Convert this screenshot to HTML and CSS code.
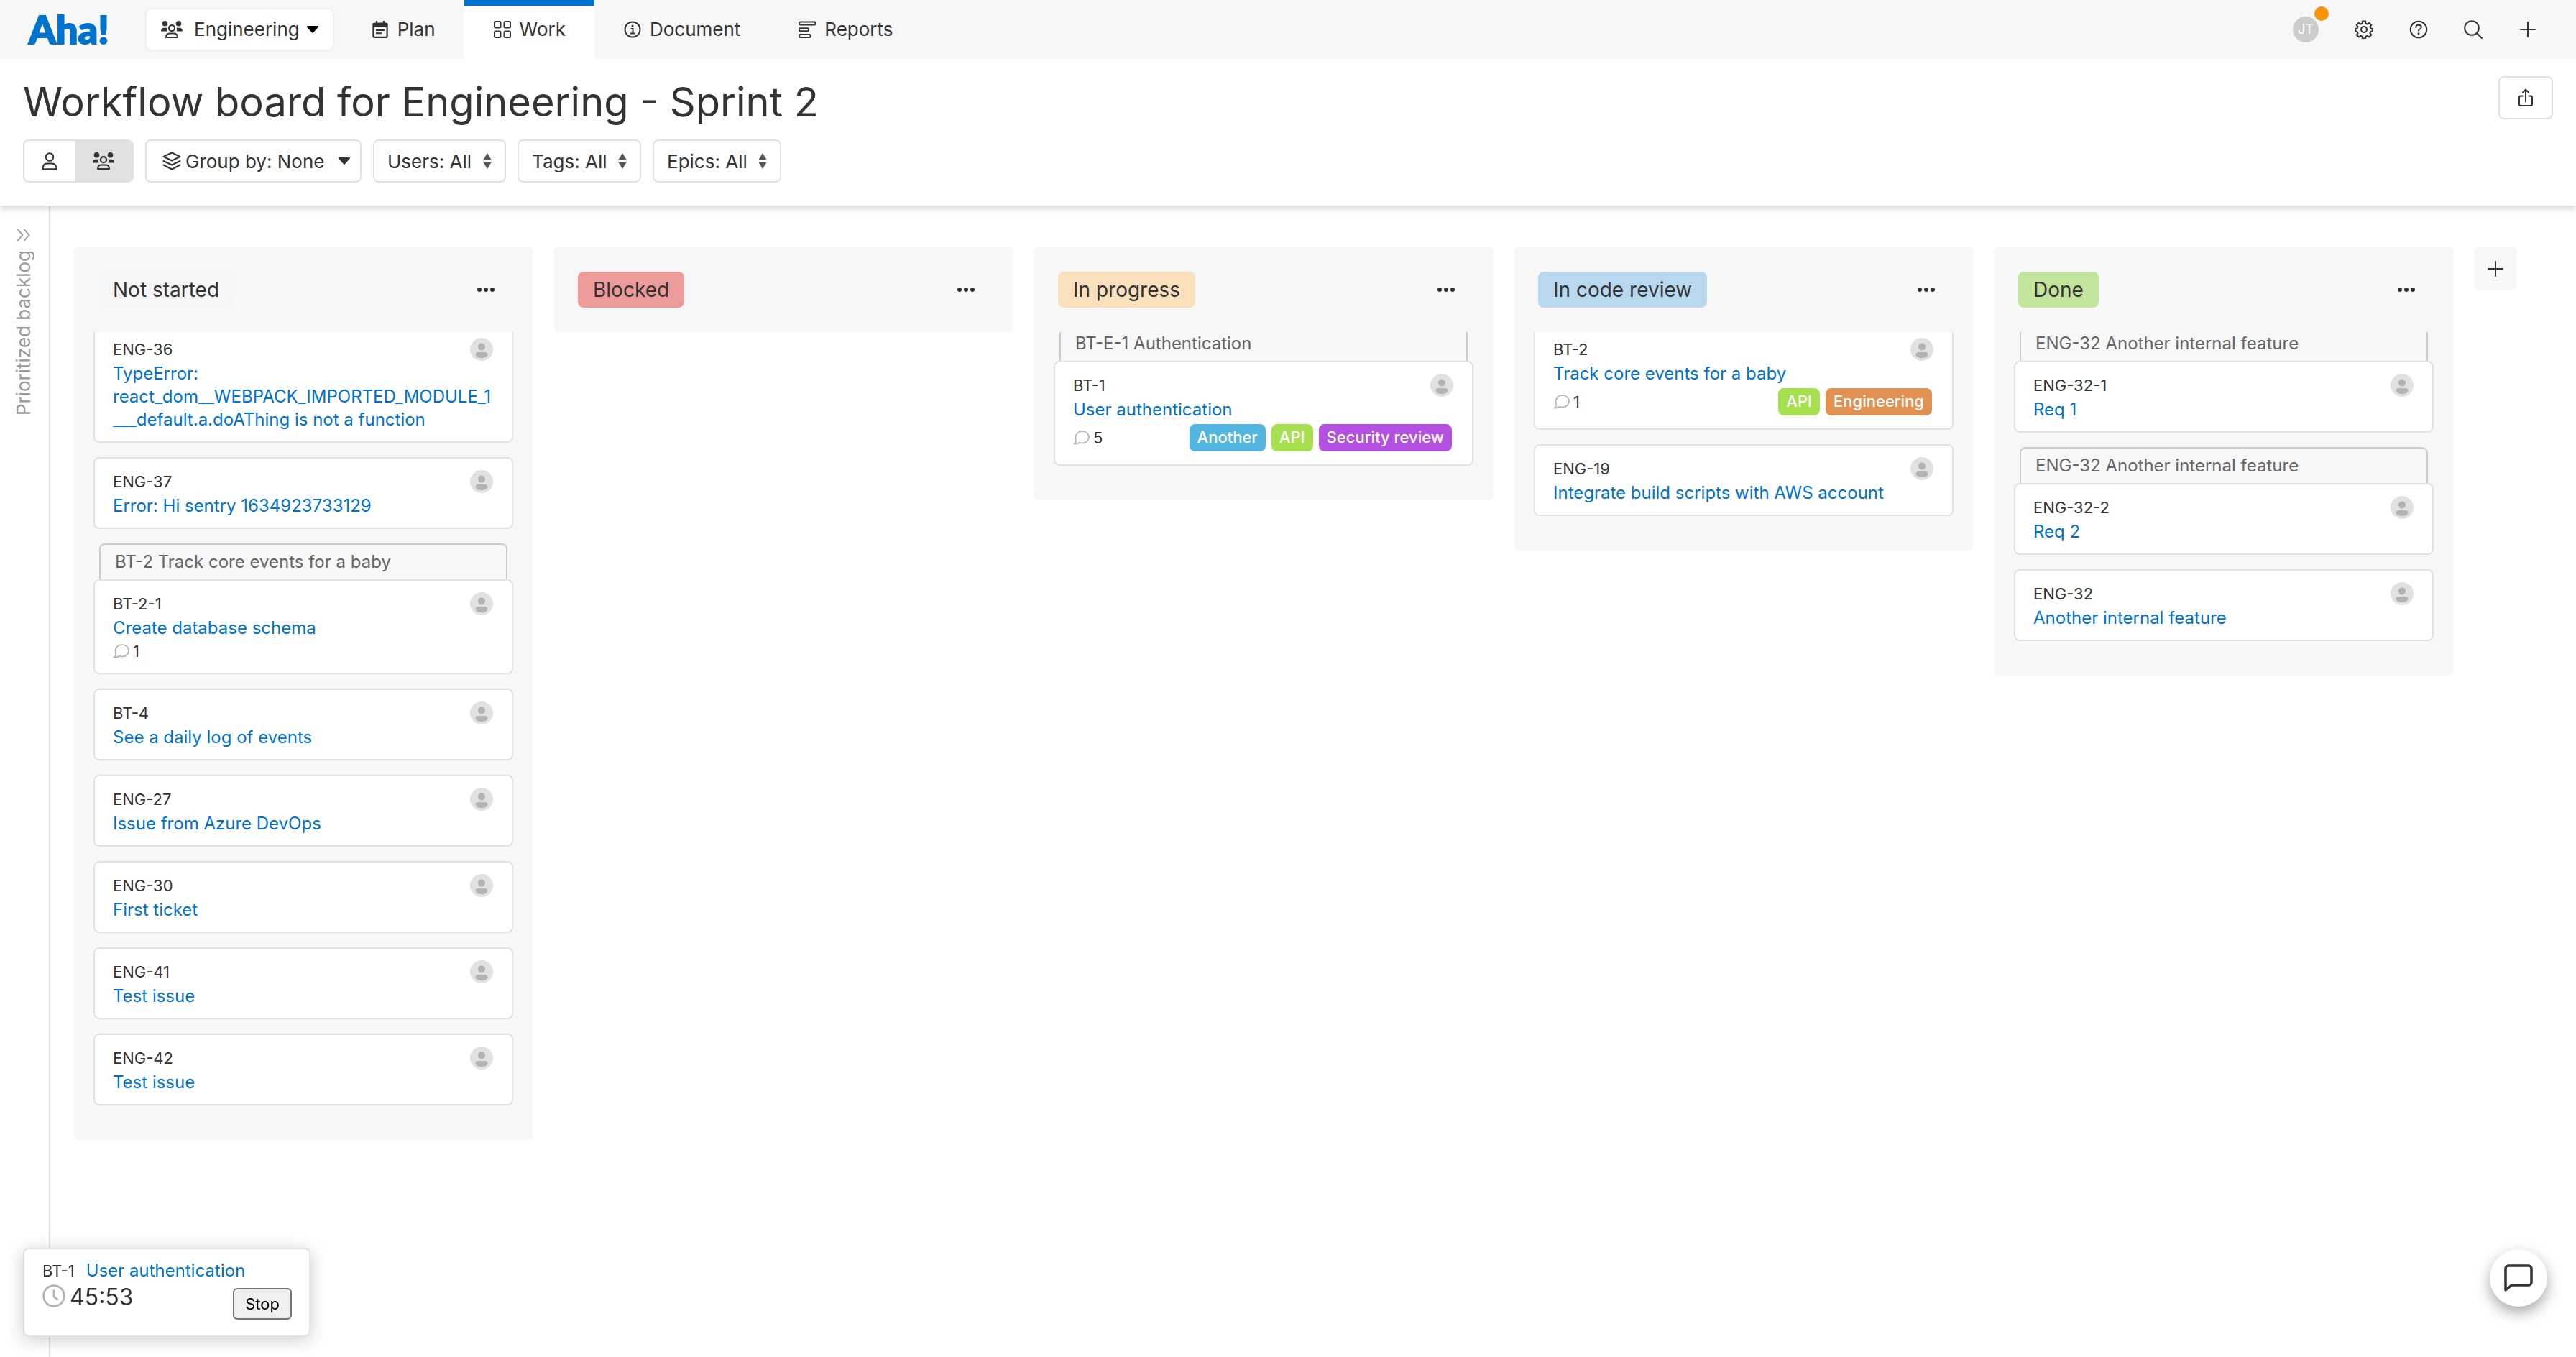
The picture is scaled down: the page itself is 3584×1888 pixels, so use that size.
FILE: index.html
```html
<!DOCTYPE html>
<html lang="en">
<head>
<meta charset="utf-8">
<title>Workflow board for Engineering - Sprint 2</title>
<link rel="stylesheet" href="styles.css">
</head>
<body>
<svg class="sprite" aria-hidden="true">
  <symbol id="i-team" viewBox="0 0 30 26">
    <g fill="currentColor"><circle cx="5.500" cy="4.800" r="3.800"/><circle cx="24.500" cy="4.800" r="3.800"/><path d="M0 15.500c0-3 1.500-4.800 4-4.800h4.500c-.8 1.600-.8 3.200-.2 4.800zM30 15.500c0-3-1.500-4.800-4-4.800h-4.500c.8 1.600.8 3.200.2 4.800z"/></g>
    <g fill="none" stroke="currentColor" stroke-width="2.200"><circle cx="15" cy="11.200" r="4"/><path d="M7 24c0-4 2-5.500 5-5.500h6c3 0 5 1.500 5 5.500z" stroke-linejoin="round"/></g>
  </symbol>
  <symbol id="i-person" viewBox="0 0 26 26">
    <g fill="none" stroke="currentColor" stroke-width="2" stroke-linejoin="round"><circle cx="13" cy="7.500" r="5.300"/><path d="M3.500 24.300c0-5 2-7.800 6-7.800h7c4 0 6 2.800 6 7.800z"/></g>
  </symbol>
  <symbol id="i-plan" viewBox="0 0 26 26">
    <path fill="currentColor" fill-rule="evenodd" d="M7 1h2.200v2.500h7.600V1H19v2.500h2a2.700 2.700 0 0 1 2.700 2.700v16A2.700 2.700 0 0 1 21 25H5a2.700 2.700 0 0 1-2.700-2.700v-16A2.700 2.700 0 0 1 5 3.500h2zM4.500 10v11.500a1.300 1.300 0 0 0 1.300 1.300h14.400a1.300 1.300 0 0 0 1.300-1.300V10zM7 13h12v2H7zM7 17.300h8v2H7z"/>
  </symbol>
  <symbol id="i-work" viewBox="0 0 26 26">
    <g fill="none" stroke="currentColor" stroke-width="2"><rect x="2" y="2" width="8.500" height="8.500" rx="1.500"/><rect x="15.500" y="2" width="8.500" height="8.500" rx="1.500"/><rect x="2" y="15.500" width="8.500" height="8.500" rx="1.500"/><rect x="15.500" y="15.500" width="8.500" height="8.500" rx="1.500"/></g>
  </symbol>
  <symbol id="i-info" viewBox="0 0 26 26">
    <circle cx="13" cy="13" r="10.500" fill="none" stroke="currentColor" stroke-width="2"/><circle cx="13" cy="8" r="1.500" fill="currentColor"/><path d="M10.500 12h3v6.500M10 18.500h6.500" fill="none" stroke="currentColor" stroke-width="2"/>
  </symbol>
  <symbol id="i-reports" viewBox="0 0 26 26">
    <g fill="none" stroke="currentColor" stroke-width="2"><rect x="2" y="2.500" width="22.500" height="4" rx="1.500"/><rect x="2" y="11.200" width="13" height="4" rx="1.500"/><rect x="2" y="20" width="15.500" height="4" rx="1.500"/></g>
  </symbol>
  <symbol id="i-caret" viewBox="0 0 16 10"><path fill="currentColor" d="M1 0h14a1 1 0 0 1 .7 1.700L9 9.300a1.400 1.400 0 0 1-2 0L.3 1.700A1 1 0 0 1 1 0z"/></symbol>
  <symbol id="i-updown" viewBox="0 0 12 24"><path fill="currentColor" d="M6 1l5.500 9H.5zM6 23l5.500-9H.5z"/></symbol>
  <symbol id="i-layers" viewBox="0 0 26 26">
    <g fill="none" stroke="currentColor" stroke-width="2" stroke-linejoin="round" stroke-linecap="round"><path d="M13 1.500L24.500 7 13 12.500 1.500 7z"/><path d="M1.500 13L13 18.500 24.500 13M1.500 18.500L13 24.500l11.500-6"/></g>
  </symbol>
  <symbol id="i-gear" viewBox="0 0 26 26">
    <g fill="none" stroke="currentColor" stroke-width="2" stroke-linejoin="round"><circle cx="13" cy="13" r="4"/><path d="M10.800 1.500h4.400v3l2.700 1.200 2.300-2 3.100 3.100-1.900 2.400 1.100 2.200 2.200.4v3.500l-2.300.6-1 2.300 1.900 2.300-3.200 3-2.400-1.800-2.500 1.200v2.600h-4.400v-2.600l-2.500-1.200-2.400 1.800-3.200-3 1.900-2.300-1-2.300-2.300-.6v-3.500l2.200-.4 1.100-2.200-1.900-2.400 3.100-3.100 2.300 2 2.700-1.200z"/></g>
  </symbol>
  <symbol id="i-help" viewBox="0 0 26 26">
    <g fill="none" stroke="currentColor" stroke-width="2" stroke-linecap="round"><circle cx="13" cy="13" r="11.300"/><path d="M9.300 10c0-2 1.500-3.300 3.700-3.300S16.800 8 16.800 9.800c0 2.700-3.800 2.700-3.800 5"/></g><circle cx="13" cy="18.800" r="1.500" fill="currentColor"/>
  </symbol>
  <symbol id="i-search" viewBox="0 0 26 26"><g fill="none" stroke="currentColor" stroke-width="2" stroke-linecap="round"><circle cx="11" cy="11" r="9.800"/><path d="M18 18l7 7"/></g></symbol>
  <symbol id="i-plus" viewBox="0 0 26 26"><path d="M13 3v20M3 13h20" fill="none" stroke="currentColor" stroke-width="2" stroke-linecap="round"/></symbol>
  <symbol id="i-share" viewBox="0 0 26 26"><path d="M8.500 10.500H6a2 2 0 0 0-2 2V22a2 2 0 0 0 2 2h14a2 2 0 0 0 2-2v-9.500a2 2 0 0 0-2-2h-2.500M13 18.500V2M9 5.500L13 1.700l4 3.800" fill="none" stroke="currentColor" stroke-width="2" stroke-linecap="round"/></symbol>
  <symbol id="i-more" viewBox="0 0 24 6"><g fill="currentColor"><circle cx="3" cy="3" r="3"/><circle cx="12" cy="3" r="3"/><circle cx="21" cy="3" r="3"/></g></symbol>
  <symbol id="i-chevrons" viewBox="0 0 20 18"><path d="M1.500 1l7 8-7 8M10.500 1l7 8-7 8" fill="none" stroke="currentColor" stroke-width="1.800"/></symbol>
  <symbol id="i-user" viewBox="0 0 32 32"><circle cx="16" cy="16" r="16" fill="#e1e1e1"/><circle cx="16" cy="12.500" r="5" fill="#b3b3b3"/><path d="M7.500 23c0-2 2-3 4-3h9c2 0 4 1 4 3 0 3-4 5-8.500 5s-8.500-2-8.500-5z" fill="#b3b3b3"/></symbol>
  <symbol id="i-comment" viewBox="0 0 24 20"><path d="M4.500 14.500C1.500 8 5.500 1 13 1c5 0 9 3.500 9 8.200s-4 8.300-9 8.300c-1.500 0-3-.3-4-.8-2 1.500-4.500 2-7.500 2 1.500-1.200 2.500-2.500 3-4.200z" fill="none" stroke="#b3b3b3" stroke-width="1.700" stroke-linejoin="round"/></symbol>
  <symbol id="i-clock" viewBox="0 0 30 30"><g fill="none" stroke="#b3b3b3" stroke-width="2.500" stroke-linecap="round"><circle cx="15" cy="15" r="13.500"/><path d="M15 8v8l4.500 3.500"/></g></symbol>
  <symbol id="i-chat" viewBox="0 0 40 38"><path d="M6 2h28a4 4 0 0 1 4 4v19a4 4 0 0 1-4 4H10.500L2 36V6a4 4 0 0 1 4-4z" fill="none" stroke="currentColor" stroke-width="3.500" stroke-linejoin="round"/></symbol>
</svg>

<header class="topbar">
  <a class="logo" href="#">Aha!</a>
  <button class="workspace" type="button"><svg class="icon-wide"><use href="#i-team"/></svg>Engineering<svg class="caret"><use href="#i-caret"/></svg></button>
  <nav class="tabs">
    <a class="tab" href="#"><svg class="icon"><use href="#i-plan"/></svg>Plan</a>
    <a class="tab tab-active" href="#" aria-current="page"><svg class="icon"><use href="#i-work"/></svg>Work</a>
    <a class="tab" href="#"><svg class="icon"><use href="#i-info"/></svg>Document</a>
    <a class="tab" href="#"><svg class="icon"><use href="#i-reports"/></svg>Reports</a>
  </nav>
  <div class="tools">
    <button class="account" type="button" aria-label="Account"><span class="initials">JT</span><span class="badge"></span></button>
    <button class="tool" type="button" aria-label="Settings"><svg class="icon"><use href="#i-gear"/></svg></button>
    <button class="tool" type="button" aria-label="Help"><svg class="icon"><use href="#i-help"/></svg></button>
    <button class="tool" type="button" aria-label="Search"><svg class="icon"><use href="#i-search"/></svg></button>
    <button class="tool" type="button" aria-label="Add"><svg class="icon"><use href="#i-plus"/></svg></button>
  </div>
</header>

<section class="page-head">
  <div class="title-row">
    <h1>Workflow board for Engineering - Sprint 2</h1>
    <button class="box share" type="button" aria-label="Share"><svg class="icon"><use href="#i-share"/></svg></button>
  </div>
  <div class="filters">
    <div class="box toggle">
      <button type="button" aria-label="My work" aria-pressed="false"><svg class="icon"><use href="#i-person"/></svg></button>
      <button type="button" aria-label="Team work" aria-pressed="true"><svg class="icon-wide"><use href="#i-team"/></svg></button>
    </div>
    <label class="box filter filter-group"><svg class="icon"><use href="#i-layers"/></svg><select aria-label="Group by"><option>Group by: None</option></select><svg class="caret"><use href="#i-caret"/></svg></label>
    <label class="box filter"><select aria-label="Users"><option>Users: All</option></select><svg class="updown"><use href="#i-updown"/></svg></label>
    <label class="box filter"><select aria-label="Tags"><option>Tags: All</option></select><svg class="updown"><use href="#i-updown"/></svg></label>
    <label class="box filter"><select aria-label="Epics"><option>Epics: All</option></select><svg class="updown"><use href="#i-updown"/></svg></label>
  </div>
</section>

<div class="workarea">
  <aside class="backlog">
    <button type="button"><svg class="chevrons"><use href="#i-chevrons"/></svg><span class="backlog-label">Prioritized backlog</span></button>
  </aside>
  <main class="board">
    <section class="column">
      <header class="column-head"><h2 class="status">Not started</h2><button class="more" type="button" aria-label="Column menu"><svg><use href="#i-more"/></svg></button></header>
      <div class="cards">
        <article class="card"><div class="card-top"><span>ENG-36</span><svg class="avatar"><use href="#i-user"/></svg></div><a href="#">TypeError: react_dom__WEBPACK_IMPORTED_MODULE_1___default.a.doAThing is not a function</a></article>
        <article class="card"><div class="card-top"><span>ENG-37</span><svg class="avatar"><use href="#i-user"/></svg></div><a href="#">Error: Hi sentry 1634923733129</a></article>
        <div class="nested"><div class="parent">BT-2 Track core events for a baby</div>
        <article class="card"><div class="card-top"><span>BT-2-1</span><svg class="avatar"><use href="#i-user"/></svg></div><a href="#">Create database schema</a><div class="meta"><span class="comments"><svg><use href="#i-comment"/></svg>1</span></div></article></div>
        <article class="card"><div class="card-top"><span>BT-4</span><svg class="avatar"><use href="#i-user"/></svg></div><a href="#">See a daily log of events</a></article>
        <article class="card"><div class="card-top"><span>ENG-27</span><svg class="avatar"><use href="#i-user"/></svg></div><a href="#">Issue from Azure DevOps</a></article>
        <article class="card"><div class="card-top"><span>ENG-30</span><svg class="avatar"><use href="#i-user"/></svg></div><a href="#">First ticket</a></article>
        <article class="card"><div class="card-top"><span>ENG-41</span><svg class="avatar"><use href="#i-user"/></svg></div><a href="#">Test issue</a></article>
        <article class="card"><div class="card-top"><span>ENG-42</span><svg class="avatar"><use href="#i-user"/></svg></div><a href="#">Test issue</a></article>
      </div>
    </section>
    <section class="column">
      <header class="column-head"><h2 class="status status-blocked">Blocked</h2><button class="more" type="button" aria-label="Column menu"><svg><use href="#i-more"/></svg></button></header>
    </section>
    <section class="column">
      <header class="column-head"><h2 class="status status-progress">In progress</h2><button class="more" type="button" aria-label="Column menu"><svg><use href="#i-more"/></svg></button></header>
      <div class="cards">
        <div class="nested"><div class="parent">BT-E-1 Authentication</div>
        <article class="card"><div class="card-top"><span>BT-1</span><svg class="avatar"><use href="#i-user"/></svg></div><a href="#">User authentication</a><div class="meta meta-tagged"><span class="comments"><svg><use href="#i-comment"/></svg>5</span><span class="tag tag-blue">Another</span><span class="tag tag-green">API</span><span class="tag tag-purple">Security review</span></div></article></div>
      </div>
    </section>
    <section class="column">
      <header class="column-head"><h2 class="status status-review">In code review</h2><button class="more" type="button" aria-label="Column menu"><svg><use href="#i-more"/></svg></button></header>
      <div class="cards">
        <article class="card"><div class="card-top"><span>BT-2</span><svg class="avatar"><use href="#i-user"/></svg></div><a href="#">Track core events for a baby</a><div class="meta meta-tagged"><span class="comments"><svg><use href="#i-comment"/></svg>1</span><span class="tag tag-green">API</span><span class="tag tag-orange">Engineering</span></div></article>
        <article class="card"><div class="card-top"><span>ENG-19</span><svg class="avatar"><use href="#i-user"/></svg></div><a href="#">Integrate build scripts with AWS account</a></article>
      </div>
    </section>
    <section class="column">
      <header class="column-head"><h2 class="status status-done">Done</h2><button class="more" type="button" aria-label="Column menu"><svg><use href="#i-more"/></svg></button></header>
      <div class="cards">
        <div class="nested"><div class="parent">ENG-32 Another internal feature</div>
        <article class="card"><div class="card-top"><span>ENG-32-1</span><svg class="avatar"><use href="#i-user"/></svg></div><a href="#">Req 1</a></article></div>
        <div class="nested"><div class="parent">ENG-32 Another internal feature</div>
        <article class="card"><div class="card-top"><span>ENG-32-2</span><svg class="avatar"><use href="#i-user"/></svg></div><a href="#">Req 2</a></article></div>
        <article class="card"><div class="card-top"><span>ENG-32</span><svg class="avatar"><use href="#i-user"/></svg></div><a href="#">Another internal feature</a></article>
      </div>
    </section>
    <button class="add-column" type="button" aria-label="Add column"><svg class="icon"><use href="#i-plus"/></svg></button>
  </main>
</div>

<aside class="timer">
  <div class="timer-item"><span>BT-1</span><a href="#">User authentication</a></div>
  <div class="timer-row"><svg class="clock"><use href="#i-clock"/></svg><span class="elapsed">45:53</span><button class="stop" type="button">Stop</button></div>
</aside>
<button class="chat" type="button" aria-label="Chat"><svg><use href="#i-chat"/></svg></button>
</body>
</html>
```
FILE: styles.css
```css
* { box-sizing: border-box; }

body {
  margin: 0;
  min-height: 100vh;
  display: flex;
  flex-direction: column;
  background: #fff;
  color: #333;
  font: 26px/32px Inter, "Liberation Sans", sans-serif;
}

h1, h2 { margin: 0; font-weight: 400; }
button, select { font: inherit; color: inherit; background: none; border: 0; padding: 0; margin: 0; }
button { cursor: pointer; display: flex; align-items: center; justify-content: center; }
a { color: #0073cf; text-decoration: none; }
svg { display: block; flex: none; }

.sprite { position: absolute; width: 0; height: 0; }
.icon { width: 26px; height: 26px; }
.icon-wide { width: 30px; height: 26px; }
.caret { width: 16px; height: 10px; }
.updown { width: 12px; height: 24px; color: #555; }

/* Top navigation */
.topbar { display: flex; align-items: center; height: 82px; background: #f7f7f7; }
.logo { width: 202px; padding-left: 40px; font: 900 54px/64px Lato, sans-serif; -webkit-text-stroke: 2px #0073cf; }
.workspace {
  height: 60px;
  padding: 0 20px;
  margin-right: 11px;
  background: #fff;
  border: 2px solid #efefef;
  border-radius: 8px;
}
.workspace .icon-wide { margin-right: 16px; }
.workspace .caret { margin-left: 10px; color: #000; }
.tabs { display: flex; align-self: stretch; }
.tab {
  display: flex;
  align-items: center;
  gap: 11px;
  padding: 0 40px 8px;
  border-top: 8px solid transparent;
  color: #333;
}
.tab-active { background: #fff; border-top-color: #0073cf; }
.tools { display: flex; align-items: center; gap: 50px; margin-left: auto; padding-right: 54px; }
.account { position: relative; }
.initials {
  width: 36px;
  border-radius: 50%;
  background: #ccc;
  color: #fff;
  font-size: 18px;
  line-height: 36px;
}
.badge { position: absolute; top: -14px; right: -14px; width: 20px; height: 20px; border-radius: 50%; background: #f8930c; }

/* Page heading and filters */
.page-head { position: relative; z-index: 2; padding: 24px 32px 32px; background: #fff; box-shadow: 0 6px 6px rgba(0, 0, 0, .12); }
.title-row { display: flex; justify-content: space-between; align-items: flex-start; margin-bottom: 16px; }
h1 { font-size: 56px; line-height: 72px; }
.box { height: 60px; background: #fff; border: 2px solid #e1e1e1; border-radius: 8px; }
.share { width: 76px; }
.filters { display: flex; gap: 16px; }
.toggle { display: flex; width: 154px; overflow: hidden; }
.toggle button { flex: 1; }
.toggle [aria-pressed="true"] { flex: none; width: 80px; background: #e1e1e1; }
.filter { display: flex; align-items: center; gap: 15px; padding: 0 18px; }
.filter select { appearance: none; padding-top: 2px; }
.filter-group { padding: 0 14px 0 22px; }
.filter-group .icon { margin-right: -9px; }
.filter-group .caret { margin-left: 4px; }

/* Board */
.workarea { flex: 1; display: flex; }
.backlog { width: 70px; border-right: 2px solid #e1e1e1; padding-top: 32px; color: #999; }
.backlog button { flex-direction: column; gap: 12px; width: 66px; }
.chevrons { width: 20px; height: 18px; }
.backlog-label { writing-mode: vertical-rl; transform: rotate(180deg); }
.board { flex: 1; display: flex; align-items: flex-start; gap: 28px; padding: 58px 32px; }
.column { flex: 0 0 640px; background: #f7f7f7; border-radius: 8px; }
.column-head {
  position: relative;
  z-index: 1;
  display: flex;
  justify-content: space-between;
  align-items: center;
  height: 118px;
  padding: 0 54px 0 34px;
  background: #f7f7f7;
  border-radius: 8px;
}
.status { padding: 0 21px; background: #f5f5f5; border-radius: 8px; font-size: 28px; line-height: 50px; }
.status-blocked { background: #ec9a9a; }
.status-progress { background: #fbe0bd; }
.status-review { background: #b8d8ef; }
.status-done { background: #c3e49d; }
.more svg { width: 24px; height: 6px; }

/* The card list is scrolled slightly under the column header */
.cards { display: flex; flex-direction: column; gap: 20px; margin-top: -10px; padding: 0 28px 48px; }
.card {
  padding: 16px 26px 14px 25px;
  background: #fff;
  border: 2px solid #e1e1e1;
  border-radius: 8px;
  font-size: 22px;
  line-height: 32px;
}
.card-top { display: flex; justify-content: space-between; margin-bottom: 2px; }
.card a { display: block; font-size: 24px; overflow-wrap: anywhere; }
.avatar { width: 32px; height: 32px; }
.parent {
  margin: 0 8px;
  padding: 8px 20px;
  border: 2px solid #ccc;
  border-bottom: 0;
  border-radius: 8px 8px 0 0;
  color: #666;
  font-size: 24px;
}
.meta { display: flex; align-items: center; gap: 8px; }
.meta-tagged { padding: 4px 2px 4px 0; }
.comments { display: flex; align-items: center; gap: 4px; margin-right: auto; }
.comments svg { width: 24px; height: 20px; }
.tag { padding: 0 11px 2px; border-radius: 8px; color: #fff; font-weight: 500; line-height: 36px; }
.tag-blue { background: #52b5e0; }
.tag-green { background: #a6e04f; }
.tag-purple { background: #b350e1; }
.tag-orange { background: #e09152; }
.add-column { width: 60px; height: 60px; background: #f7f7f7; border-radius: 8px; }

/* Floating widgets */
.timer {
  position: fixed;
  z-index: 3;
  left: 32px;
  bottom: 28px;
  width: 400px;
  height: 124px;
  padding: 14px 24px 14px 25px;
  background: #fff;
  border: 2px solid #e1e1e1;
  border-radius: 8px;
  box-shadow: 0 4px 24px rgba(0, 0, 0, .2);
}
.timer-item { display: flex; align-items: baseline; gap: 16px; font-size: 22px; }
.timer-item a { font-size: 24px; }
.timer-row { display: flex; align-items: flex-start; gap: 6px; margin-top: 3px; }
.clock { width: 32px; height: 32px; }
.elapsed { font-size: 32px; line-height: 36px; }
.stop {
  height: 44px;
  margin: 5px 0 0 auto;
  padding: 0 15px;
  background: #efefef;
  border: 2px solid #767676;
  border-radius: 6px;
  color: #000;
  font-size: 22px;
}
.chat {
  position: fixed;
  z-index: 3;
  right: 40px;
  bottom: 70px;
  width: 80px;
  height: 80px;
  background: #fff;
  border-radius: 50%;
  box-shadow: 0 8px 20px rgba(0, 0, 0, .35);
}
.chat svg { width: 40px; height: 38px; }
```
